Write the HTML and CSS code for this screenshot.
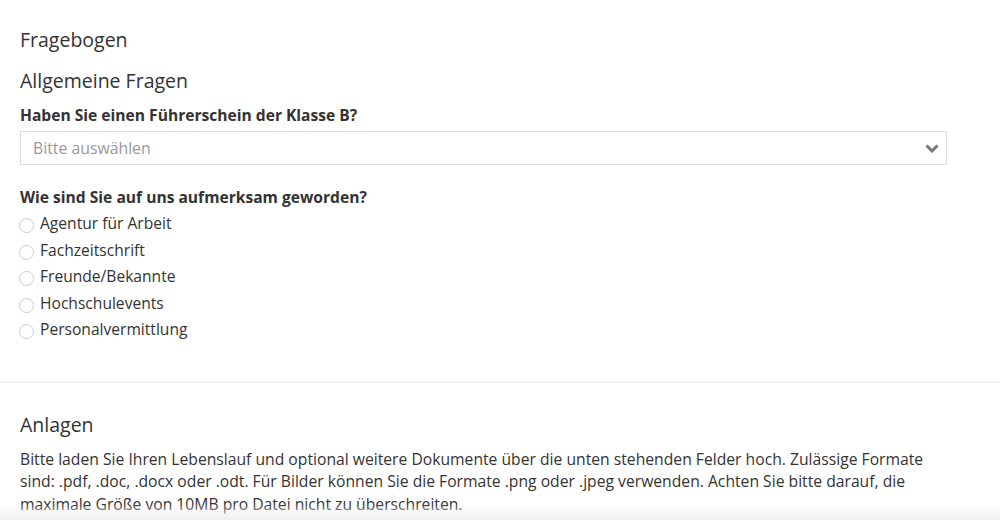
FILE: index.html
```html
<!DOCTYPE html>
<html lang="de">
<head>
    <meta charset="UTF-8">
    <title>Fragebogen</title>
    <meta name="viewport" content="width=device-width, initial-scale=1.0">
    <link rel="stylesheet" href="styles.css">
</head>
<body>
    <section class="form-section">
        <h2 class="section-title">Fragebogen</h2>
        <h3 class="group-title">Allgemeine Fragen</h3>

        <div class="field">
            <label class="field-label" for="fuehrerschein">Haben Sie einen Führerschein der Klasse B?</label>
            <div class="select-wrap">
                <select id="fuehrerschein" class="select">
                    <option>Bitte auswählen</option>
                    <option>Ja</option>
                    <option>Nein</option>
                </select>
                <svg class="select-arrow" width="14" height="10" viewBox="0 0 14 10">
                    <path d="M1.5 2.5 L7 8 L12.5 2.5" fill="none" stroke="#777" stroke-width="3"/>
                </svg>
            </div>
        </div>

        <div class="field field-radios">
            <div class="field-label">Wie sind Sie auf uns aufmerksam geworden?</div>
            <label class="radio"><input type="radio" name="quelle"><span class="radio-dot"></span>Agentur für Arbeit</label>
            <label class="radio"><input type="radio" name="quelle"><span class="radio-dot"></span>Fachzeitschrift</label>
            <label class="radio"><input type="radio" name="quelle"><span class="radio-dot"></span>Freunde/Bekannte</label>
            <label class="radio"><input type="radio" name="quelle"><span class="radio-dot"></span>Hochschulevents</label>
            <label class="radio"><input type="radio" name="quelle"><span class="radio-dot"></span>Personalvermittlung</label>
        </div>
    </section>

    <section class="form-section attachments">
        <h3 class="group-title">Anlagen</h3>
        <p class="hint">Bitte laden Sie Ihren Lebenslauf und optional weitere Dokumente über die unten stehenden Felder hoch. Zulässige Formate sind: .pdf, .doc, .docx oder .odt. Für Bilder können Sie die Formate .png oder .jpeg verwenden. Achten Sie bitte darauf, die maximale Größe von 10MB pro Datei nicht zu überschreiten.</p>
    </section>

    <div class="bottom-fade"></div>
</body>
</html>
```

FILE: styles.css
```css
* {
    margin: 0;
    padding: 0;
    box-sizing: border-box;
    font-family: 'Open Sans', sans-serif;
}

body {
    background: #fff;
    color: #333;
    font-size: 15.6px;
    line-height: 22px;
}

.form-section {
    padding: 27px 53px 38px 20px;
}

.section-title {
    font-size: 19.5px;
    font-weight: 400;
    line-height: 26px;
}

.group-title {
    font-size: 19.5px;
    font-weight: 400;
    line-height: 28px;
    margin-top: 14px;
}

.field-label {
    display: block;
    font-weight: 700;
    margin-top: 9px;
    margin-bottom: 5px;
}

.select-wrap {
    position: relative;
}

.select {
    width: 100%;
    height: 34px;
    border: 1px solid #ddd;
    background: #fff;
    color: #999;
    font-size: 15.8px;
    padding: 0 12px;
    appearance: none;
    -webkit-appearance: none;
    border-radius: 0;
    outline: none;
}

.select-arrow {
    position: absolute;
    right: 8px;
    top: 12px;
}

.field-radios {
    margin-top: 21px;
}

.field-radios .field-label {
    margin: 0 0 2px;
}

.radio {
    display: flex;
    align-items: center;
    height: 26.5px;
    cursor: pointer;
}

.radio input {
    display: none;
}

.radio-dot {
    width: 15px;
    height: 15px;
    border: 1px solid #ccc;
    border-radius: 50%;
    margin: 5px 6px 0 -1px;
    flex-shrink: 0;
}

.attachments {
    border-top: 2px solid #f2f2f2;
    padding-top: 28px;
}

.attachments .group-title {
    margin-top: 0;
}

.hint {
    margin-top: 9px;
    font-size: 15.7px;
    line-height: 22.5px;
}

.bottom-fade {
    position: fixed;
    left: 0;
    right: 0;
    bottom: 0;
    height: 16px;
    background: linear-gradient(to bottom, rgba(240, 240, 240, 0), rgba(240, 240, 240, 1));
    pointer-events: none;
}
```
